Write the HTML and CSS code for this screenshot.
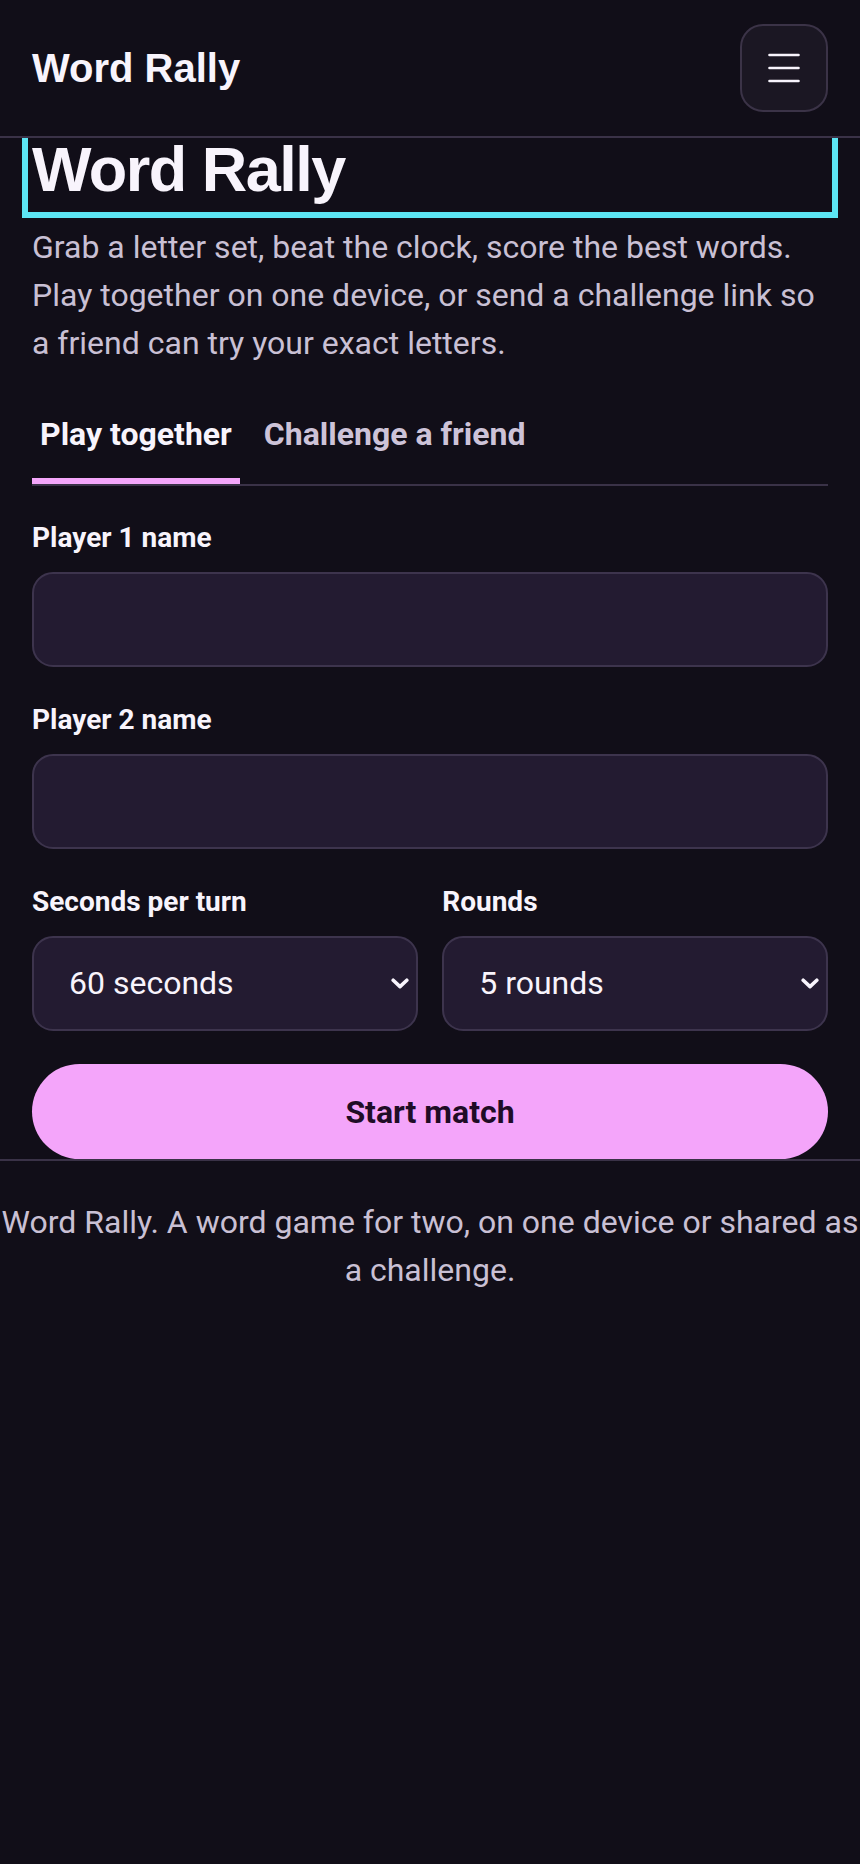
FILE: index.html
```html
<!DOCTYPE html>
<html lang="en">
<head>
<meta charset="utf-8">
<title>Word Rally</title>
<link rel="stylesheet" href="styles.css">
</head>
<body>
<header class="topbar">
  <span class="brand">Word Rally</span>
  <button class="menu-btn" type="button" aria-label="Open menu">
    <svg class="menu-icon" width="32" height="30" viewBox="0 0 32 30" aria-hidden="true">
      <path d="M1.5 2h29M1.5 15h29M1.5 28h29" stroke="currentColor" stroke-width="2.6" stroke-linecap="round" fill="none"/>
    </svg>
  </button>
</header>
<main class="page">
  <h1 class="title" tabindex="-1">Word Rally</h1>
  <p class="intro">Grab a letter set, beat the clock, score the best words. Play together on one device, or send a challenge link so a friend can try your exact letters.</p>
  <div class="tabs" role="tablist">
    <button class="tab is-active" type="button" role="tab">Play together</button>
    <button class="tab" type="button" role="tab">Challenge a friend</button>
  </div>
  <form class="form">
    <div class="field">
      <label class="label" for="p1">Player 1 name</label>
      <input class="input" id="p1" type="text">
    </div>
    <div class="field">
      <label class="label" for="p2">Player 2 name</label>
      <input class="input" id="p2" type="text">
    </div>
    <div class="row">
      <div class="field">
        <label class="label" for="secs">Seconds per turn</label>
        <div class="select-wrap">
          <select class="select" id="secs">
            <option>60 seconds</option>
          </select>
          <svg class="chevron" width="18" height="11" viewBox="0 0 18 11" aria-hidden="true">
            <path d="M2.2 2.2L9 8.6l6.8-6.4" stroke="currentColor" stroke-width="3.6" stroke-linecap="round" stroke-linejoin="round" fill="none"/>
          </svg>
        </div>
      </div>
      <div class="field">
        <label class="label" for="rounds">Rounds</label>
        <div class="select-wrap">
          <select class="select" id="rounds">
            <option>5 rounds</option>
          </select>
          <svg class="chevron" width="18" height="11" viewBox="0 0 18 11" aria-hidden="true">
            <path d="M2.2 2.2L9 8.6l6.8-6.4" stroke="currentColor" stroke-width="3.6" stroke-linecap="round" stroke-linejoin="round" fill="none"/>
          </svg>
        </div>
      </div>
    </div>
    <button class="start" type="button">Start match</button>
  </form>
</main>
<footer class="site-footer">
  <p class="footer-text">Word Rally. A word game for two, on one device or shared as a challenge.</p>
</footer>
</body>
</html>
```
FILE: styles.css
```css
* { box-sizing: border-box; }

html, body {
  margin: 0;
  background: #110e18;
  color: #f6f1fb;
  font-family: Roboto, "Noto Sans", sans-serif;
}

.topbar {
  position: relative;
  z-index: 2;
  display: flex;
  align-items: center;
  justify-content: space-between;
  padding: 24px 32px;
  background: #110e18;
  border-bottom: 2px solid #3a3247;
}

.brand {
  font-family: "Liberation Sans", Arial, sans-serif;
  font-weight: 700;
  font-size: 40px;
  color: #f8f4fc;
}

.menu-btn {
  width: 88px;
  height: 88px;
  display: flex;
  align-items: center;
  justify-content: center;
  padding: 0;
  background: #1b1723;
  border: 2px solid #3b3347;
  border-radius: 23px;
  color: #f8f4fc;
}

.page {
  margin-top: -6px;
  padding: 0 32px;
}

.title {
  margin: 0 0 15.4px;
  font-family: "Liberation Sans", Arial, sans-serif;
  font-weight: 700;
  font-size: 63px;
  line-height: 1.2;
  letter-spacing: -0.024em;
  color: #f8f4fc;
  outline: 6px solid #5ce5f3;
  outline-offset: 4px;
}

.intro {
  margin: 0;
  font-size: 32px;
  line-height: 1.5;
  color: #c9c0d4;
}

.tabs {
  display: flex;
  gap: 16px;
  margin-top: 32px;
  border-bottom: 2px solid #3a3247;
}

.tab {
  padding: 16.5px 8px 24px;
  background: none;
  border: 0;
  border-bottom: 6px solid transparent;
  font-family: Roboto, sans-serif;
  font-weight: 700;
  font-size: 32px;
  line-height: 1.2;
  color: #cdc3d8;
}

.tab.is-active {
  color: #f8f4fc;
  border-bottom-color: #f4a6fa;
}

.form {
  display: flex;
  flex-direction: column;
  padding-top: 31.8px;
}

.field {
  display: flex;
  flex-direction: column;
  gap: 15.3px;
  margin-bottom: 33px;
}

.label {
  font-weight: 700;
  font-size: 28px;
  line-height: 1.4;
  color: #f8f4fc;
}

.input,
.select {
  width: 100%;
  height: 94.5px;
  background: #231b31;
  border: 2px solid #3d344d;
  border-radius: 21px;
  color: #f8f4fc;
  font-family: Roboto, sans-serif;
  font-size: 32px;
}

.input {
  padding: 0 32px;
}

.row {
  display: grid;
  grid-template-columns: 1fr 1fr;
  gap: 24.5px;
}

.row .field {
  margin-bottom: 33.3px;
}

.select-wrap {
  position: relative;
}

.select {
  appearance: none;
  -webkit-appearance: none;
  padding: 0 40px 0 35px;
}

.chevron {
  position: absolute;
  right: 9px;
  top: 50%;
  transform: translateY(-45%);
  color: #f8f4fc;
  pointer-events: none;
}

.start {
  height: 95.3px;
  width: 100%;
  border: 0;
  border-radius: 999px;
  background: #f4a5fa;
  color: #200c26;
  font-family: Roboto, sans-serif;
  font-weight: 700;
  font-size: 32px;
}

.site-footer {
  border-top: 2px solid #3a3247;
  padding: 37px 0 36px;
}

.footer-text {
  margin: 0;
  text-align: center;
  font-size: 32px;
  line-height: 1.5;
  color: #c9c0d4;
}
```
